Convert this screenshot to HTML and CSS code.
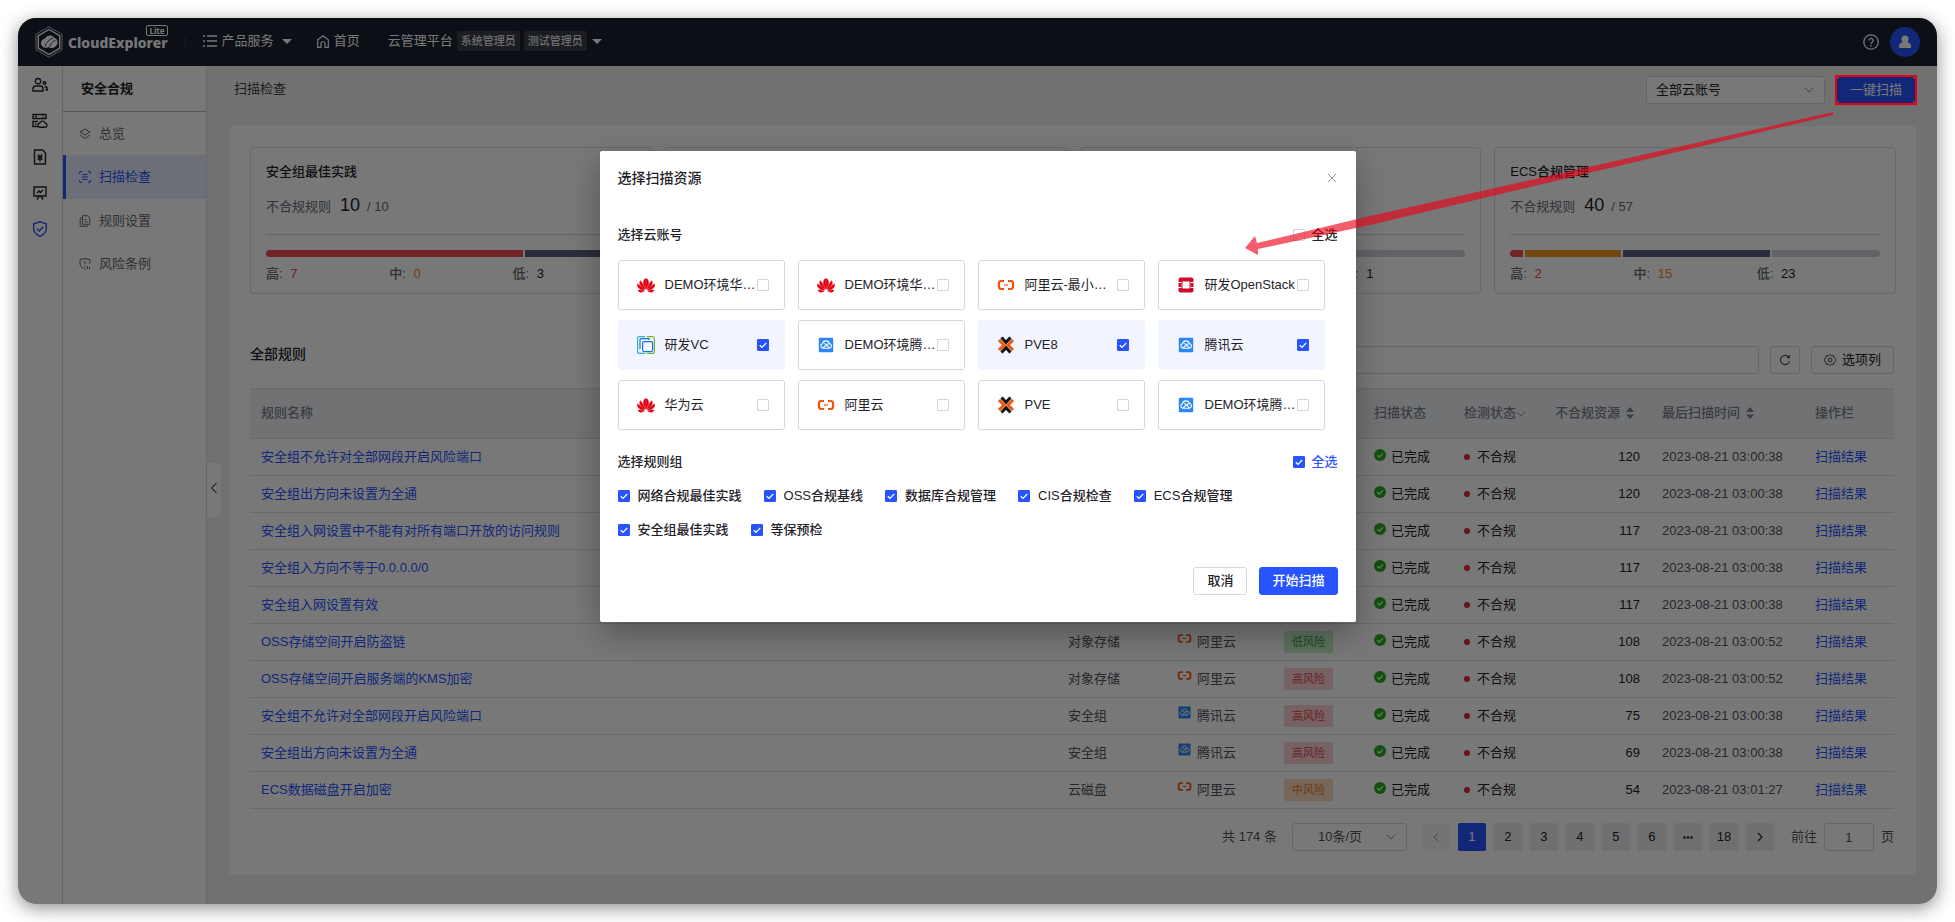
FILE: index.html
```html
<!DOCTYPE html>
<html lang="zh-CN">
<head>
<meta charset="utf-8">
<title>CloudExplorer Lite - 扫描检查</title>
<link rel="stylesheet" href="styles.css">
</head>
<body>
<svg class="sprite" aria-hidden="true">
  <symbol id="i-huawei" viewBox="0.500 1 17 15.500"><g fill="#e60012" stroke="#e60012" stroke-width=".5"><path d="M8.700 12.500C6.800 9 5.600 6 7.800 3.200c.4-.4.800-.5 1-.4.300 3.200.200 6.600-.1 9.700z"/><path d="M9.300 12.500c1.900-3.500 3.100-6.500.9-9.300-.4-.4-.8-.5-1-.4-.3 3.200-.2 6.600.1 9.700z"/><path d="M8 13C7 9.500 5.800 7 3.800 4.700 2.300 6.800 2.600 8.700 8 13z"/><path d="M10 13c1-3.500 2.200-6 4.200-8.300C15.700 6.800 15.400 8.700 10 13z"/><path d="M7.500 13.600C5.600 11.200 3.800 9.300 1 7.800c-.5 3 1.300 5.400 6.500 5.800z"/><path d="M10.500 13.600c1.900-2.400 3.700-4.300 6.500-5.800.5 3-1.300 5.400-6.500 5.800z"/><path d="M7.300 14.500c-2.400-.7-4.300-1-5.800-.9.800 2.100 3.100 2.600 5.800.9z"/><path d="M10.700 14.500c2.400-.7 4.300-1 5.800-.9-.8 2.100-3.100 2.600-5.800.9z"/></g></symbol>
  <symbol id="i-ali" viewBox="0 0 18 18"><path d="M7 5H4.200A2.500 2.500 0 0 0 1.900 7.500v3A2.500 2.500 0 0 0 4.200 13H7M11 5h2.800a2.500 2.500 0 0 1 2.300 2.500v3a2.500 2.500 0 0 1-2.300 2.500H11" fill="none" stroke="#f6540d" stroke-width="2.200"/><path d="M7 9h4" stroke="#f6540d" stroke-width="1.200"/></symbol>
  <symbol id="i-openstack" viewBox="0 0 18 18"><path fill="#cf0a2c" d="M1.500 3.500a2 2 0 0 1 2-2h11a2 2 0 0 1 2 2V6h-4V5.500h-7V6h-4zM1.500 7h2.700v4H1.500zM13.800 7h2.700v4h-2.700zM1.500 12h4v.5h7V12h4v2.500a2 2 0 0 1-2 2h-11a2 2 0 0 1-2-2zM5.500 6v6h-1V6zM13.500 6v6h-1V6z"/></symbol>
  <symbol id="i-vc" viewBox="0 0 18 18"><g fill="none"><path d="M8 .6H2.600a2 2 0 0 0-2 2v12.800a2 2 0 0 0 2 2H8" stroke="#25b5d0" stroke-width="1.200"/><path d="M10 .6h5.400a2 2 0 0 1 2 2v12.800a2 2 0 0 1-2 2H10" stroke="#6fb52c" stroke-width="1.200"/><rect x="5.600" y="5.600" width="10" height="10" rx="1.500" stroke="#1a73d9" stroke-width="1.200"/><path d="M3 13V4a1.400 1.400 0 0 1 1.400-1.400H12V4" stroke="#1a73d9" stroke-width="1.200"/></g></symbol>
  <symbol id="i-tencent" viewBox="0 0 18 18"><rect x="1.800" y="1.800" width="14.400" height="14.400" rx="1" fill="#2b87f5"/><path d="M5.800 12.200a2.300 2.300 0 0 1-.3-4.500 3.600 3.600 0 0 1 7-.2 2.400 2.400 0 0 1 0 4.700zM6 12l4-3.600c1-.8 2-.8 3-.3M7 7.800c1.500-.4 2.400.3 5.200 4" fill="none" stroke="#fff" stroke-width="1.100"/></symbol>
  <symbol id="i-pve" viewBox="0 0 18 18"><g fill="none" stroke-width="3"><path d="M2 4l5 5-5 5M16 4l-5 5 5 5" stroke="#f0560a"/><path d="M4.500 1.500L9 6.300l4.500-4.800M4.500 16.500L9 11.700l4.500 4.800" stroke="#111"/></g></symbol>
  <symbol id="i-done" viewBox="0 0 12 12"><circle cx="6" cy="6" r="6" fill="#2ca91e"/><path d="M3.300 6.200l2 1.900 3.400-3.700" fill="none" stroke="#e8ffe8" stroke-width="1.300"/></symbol>
  <symbol id="i-sort" viewBox="0 0 8 12"><path d="M0 5l4-5 4 5zM0 7.500l4 4.500 4-4.500z" fill="#7d828c"/></symbol>
  <symbol id="i-down" viewBox="0 0 10 6"><path d="M.7.700L5 5 9.300.7" fill="none" stroke="#8f959e"/></symbol>
</svg>
<div class="window">
  <header class="topbar">
    <div class="brand">
      <svg class="brand-mark" viewBox="0 0 28 32"><g fill="none" stroke="#fff"><path d="M14 .8L27 8.200v15.600L14 31.200 1 23.800V8.200z" stroke-width="1" stroke-dasharray="1.500 .7"/><path d="M14 3.500L24.700 9.700v12.600L14 28.500 3.300 22.300V9.700z" stroke-width="1.400"/></g><path d="M7 20c-2.500-3 0-7 3-7.500 2-4 8-4 9.500-.5 4 .8 4 6.500 1 8.500-2.500 2.500-6 1.500-7 .5-2 1.500-5 1-6.500-1z" fill="#fff"/><path d="M10 20.500c1-4 4-7 8-8.500M14.500 21c.5-3 3-5.500 6-6.500" stroke="#1a202e" fill="none" stroke-width=".8"/></svg>
      <div class="brand-text"><span class="brand-lite">Lite</span><span class="brand-name">CloudExplorer</span></div>
      <i class="brand-rule"></i>
    </div>
    <nav class="topnav">
      <button class="nav-item nav-products" type="button"><svg width="14" height="12" viewBox="0 0 14 12"><path d="M0 1h2M4 1h10M0 6h2M4 6h10M0 11h2M4 11h10" stroke="#fff" stroke-width="1.300"/></svg><span>产品服务</span><i class="caret"></i></button>
      <a class="nav-item nav-home" href="#"><svg width="12" height="13" viewBox="0 0 12 13"><path d="M.7 12.300V4.800L6 .8l5.300 4v7.500H8V8.500a2 2 0 0 0-4 0v3.800z" fill="none" stroke="#fff" stroke-width="1.200"/></svg><span>首页</span></a>
      <button class="nav-item nav-role" type="button"><span>云管理平台</span><span class="role">系统管理员</span><span class="role">测试管理员</span><i class="caret"></i></button>
    </nav>
    <div class="user-tools">
      <button class="icon-btn" type="button" aria-label="帮助"><svg width="16" height="16" viewBox="0 0 16 16" fill="none" stroke="#fff" stroke-width="1.300"><circle cx="8" cy="8" r="7.200"/><path d="M5.900 6.500a2.100 2.100 0 1 1 3.200 1.800c-.8.500-1.100.8-1.100 1.600"/><path d="M8 11v1.400" stroke-width="1.500"/></svg></button>
      <button class="avatar" type="button" aria-label="用户"><svg width="14" height="14" viewBox="0 0 14 14" fill="#fff"><circle cx="7" cy="4" r="3.600"/><path d="M5 7h4c3 1 4 2 4 5v1H1v-1c0-3 1-4 4-5z"/></svg></button>
    </div>
  </header>
  <div class="body">
    <nav class="rail">
      <a href="#" aria-label="用户管理"><svg viewBox="0 0 16 16"><circle cx="6" cy="4.200" r="2.700"/><path d="M1 14v-2c0-2 1.300-3 3-3h4c1.700 0 3 1 3 3v2z"/><circle cx="12.500" cy="6" r="1.300"/><path d="M12.500 9.500c1.700 0 2.700.8 2.700 2.200V13H13.500"/></svg></a>
      <a href="#" aria-label="云服务器"><svg viewBox="0 0 16 16"><path d="M1 1.500h13v4H1zM6 13.500H1v-5h5M3 3.500h2M10.500 3.500h1M3 11h1.500M7.800 14.300a2.200 2.200 0 0 1 0-4.300 2.900 2.900 0 0 1 5.400 0 2.200 2.200 0 0 1 0 4.300z"/></svg></a>
      <a href="#" aria-label="账单"><svg viewBox="0 0 16 16"><path d="M2.500 1h8l3 3v11h-11zM5.800 5.500L8 8l2.200-2.500M8 8v4.500M5.500 8.300h5M5.500 10.300h5"/></svg></a>
      <a href="#" aria-label="运营分析"><svg viewBox="0 0 16 16"><path d="M2 2h12v9H2zM5 8l2-2 1.500 1.500L11 5M5 14.500l2-3M11 14.500l-2-3M1.500 2h13"/></svg></a>
      <a class="current" href="#" aria-label="安全合规"><svg viewBox="0 0 16 16"><path d="M8 .8l6.300 2v5c0 3.500-2.300 5.800-6.300 7.500-4-1.700-6.300-4-6.300-7.500v-5zM5 7.800L7.300 10l4-4.300"/></svg></a>
    </nav>
    <aside class="side">
      <h1>安全合规</h1>
      <a class="side-item" href="#"><svg viewBox="0 0 12 12"><path d="M6 1l5 3-5 3-5-3zM1 7l5 3.500L11 7"/></svg>总览</a>
      <a class="side-item active" href="#"><svg viewBox="0 0 12 12"><path d="M.7 3V.7H3M9 .7h2.300V3M11.300 9v2.300H9M3 11.300H.7V9M3.500 3.500h5M3 6h6M3.500 8.500h5"/></svg>扫描检查</a>
      <a class="side-item" href="#"><svg viewBox="0 0 12 12"><path d="M3.500.7h5l2.300 2.300v6.300H3.500zM3.500 3H1.200v8.300h7V9.500M5.300 4.500h2M5.300 6.800h3.500"/></svg>规则设置</a>
      <a class="side-item" href="#"><svg viewBox="0 0 12 12"><path d="M6.500 11C3 9.700 1 8.500 1 5.500v-4L6 .6l5 .9v4.300M6 3v3.500M6 7.500v1M8.500 8v3M10.500 8.500v2.500"/></svg>风险条例</a>
    </aside>
    <main class="main">
      <button class="collapse" type="button" aria-label="收起菜单"><svg width="8" height="12" viewBox="0 0 8 12"><path d="M6.500 1L1.500 6l5 5" fill="none" stroke="#555a63" stroke-width="1.100"/></svg></button>
      <div class="page-head">
        <h2>扫描检查</h2>
        <div class="page-tools">
          <div class="select account-select"><select aria-label="云账号"><option>全部云账号</option></select><svg><use href="#i-down"/></svg></div>
          <div class="scan-wrap"><button class="btn primary" type="button">一键扫描</button></div>
        </div>
      </div>
      <section class="panel">
        <div class="summary">
          <article class="card">
            <h3>安全组最佳实践</h3>
            <p class="figure">不合规规则<strong>10</strong><span>/ 10</span></p>
            <div class="bar"><i class="high" style="flex-grow:70"></i><i class="low" style="flex-grow:30"></i></div>
            <ul class="levels"><li>高: <b class="t-high">7</b></li><li>中: <b class="t-mid">0</b></li><li>低: <b>3</b></li></ul>
          </article>
          <article class="card"></article>
          <article class="card">
            <h3></h3><p class="figure"></p>
            <div class="bar"><i class="rest" style="flex-grow:1"></i></div>
            <ul class="levels"><li></li><li></li><li>低: <b>1</b></li></ul>
          </article>
          <article class="card">
            <h3>ECS合规管理</h3>
            <p class="figure">不合规规则<strong>40</strong><span>/ 57</span></p>
            <div class="bar"><i class="high" style="flex-grow:2"></i><i class="mid" style="flex-grow:15"></i><i class="low" style="flex-grow:23"></i><i class="rest" style="flex-grow:17"></i></div>
            <ul class="levels"><li>高: <b class="t-high">2</b></li><li>中: <b class="t-mid">15</b></li><li>低: <b>23</b></li></ul>
          </article>
        </div>
        <div class="table-tools">
          <h2>全部规则</h2>
          <input class="search" type="text" aria-label="搜索">
          <button class="btn square" type="button" aria-label="刷新"><svg width="12" height="12" viewBox="0 0 12 12"><path d="M10 3.500A4.600 4.600 0 1 0 10.600 7M10.300 1v2.700H7.700" fill="none" stroke="#444" stroke-width="1.100"/></svg></button>
          <button class="btn columns" type="button"><svg width="12" height="12" viewBox="0 0 12 12" fill="none" stroke="#444"><path d="M6 .6l1.500 1.200 2.200-.1.500 2 1.300 1.500v1.600l-1.300 1.500-.5 2-2.200-.1L6 11.400l-1.500-1.200-2.200.1-.5-2L.5 6.800V5.200l1.300-1.500.5-2 2.200.1z"/><circle cx="6" cy="6" r="2"/></svg>选项列</button>
        </div>
        <table class="rules">
          <colgroup><col><col class="c-type"><col class="c-cloud"><col class="c-risk"><col class="c-scan"><col class="c-check"><col class="c-res"><col class="c-time"><col class="c-op"></colgroup>
          <thead><tr><th>规则名称</th><th></th><th></th><th></th><th>扫描状态</th><th>检测状态<svg class="filter"><use href="#i-down"/></svg></th><th>不合规资源<svg class="sort"><use href="#i-sort"/></svg></th><th>最后扫描时间<svg class="sort"><use href="#i-sort"/></svg></th><th>操作栏</th></tr></thead>
          <tbody>
            <tr><td><a href="#">安全组不允许对全部网段开启风险端口</a></td><td></td><td></td><td></td><td class="done"><svg><use href="#i-done"/></svg>已完成</td><td class="bad">不合规</td><td class="num">120</td><td class="time">2023-08-21 03:00:38</td><td><a href="#">扫描结果</a></td></tr>
            <tr><td><a href="#">安全组出方向未设置为全通</a></td><td></td><td></td><td></td><td class="done"><svg><use href="#i-done"/></svg>已完成</td><td class="bad">不合规</td><td class="num">120</td><td class="time">2023-08-21 03:00:38</td><td><a href="#">扫描结果</a></td></tr>
            <tr><td><a href="#">安全组入网设置中不能有对所有端口开放的访问规则</a></td><td></td><td></td><td></td><td class="done"><svg><use href="#i-done"/></svg>已完成</td><td class="bad">不合规</td><td class="num">117</td><td class="time">2023-08-21 03:00:38</td><td><a href="#">扫描结果</a></td></tr>
            <tr><td><a href="#">安全组入方向不等于0.0.0.0/0</a></td><td></td><td></td><td></td><td class="done"><svg><use href="#i-done"/></svg>已完成</td><td class="bad">不合规</td><td class="num">117</td><td class="time">2023-08-21 03:00:38</td><td><a href="#">扫描结果</a></td></tr>
            <tr><td><a href="#">安全组入网设置有效</a></td><td></td><td></td><td></td><td class="done"><svg><use href="#i-done"/></svg>已完成</td><td class="bad">不合规</td><td class="num">117</td><td class="time">2023-08-21 03:00:38</td><td><a href="#">扫描结果</a></td></tr>
            <tr><td><a href="#">OSS存储空间开启防盗链</a></td><td>对象存储</td><td class="cloud"><svg><use href="#i-ali"/></svg>阿里云</td><td><span class="tag green">低风险</span></td><td class="done"><svg><use href="#i-done"/></svg>已完成</td><td class="bad">不合规</td><td class="num">108</td><td class="time">2023-08-21 03:00:52</td><td><a href="#">扫描结果</a></td></tr>
            <tr><td><a href="#">OSS存储空间开启服务端的KMS加密</a></td><td>对象存储</td><td class="cloud"><svg><use href="#i-ali"/></svg>阿里云</td><td><span class="tag red">高风险</span></td><td class="done"><svg><use href="#i-done"/></svg>已完成</td><td class="bad">不合规</td><td class="num">108</td><td class="time">2023-08-21 03:00:52</td><td><a href="#">扫描结果</a></td></tr>
            <tr><td><a href="#">安全组不允许对全部网段开启风险端口</a></td><td>安全组</td><td class="cloud"><svg><use href="#i-tencent"/></svg>腾讯云</td><td><span class="tag red">高风险</span></td><td class="done"><svg><use href="#i-done"/></svg>已完成</td><td class="bad">不合规</td><td class="num">75</td><td class="time">2023-08-21 03:00:38</td><td><a href="#">扫描结果</a></td></tr>
            <tr><td><a href="#">安全组出方向未设置为全通</a></td><td>安全组</td><td class="cloud"><svg><use href="#i-tencent"/></svg>腾讯云</td><td><span class="tag red">高风险</span></td><td class="done"><svg><use href="#i-done"/></svg>已完成</td><td class="bad">不合规</td><td class="num">69</td><td class="time">2023-08-21 03:00:38</td><td><a href="#">扫描结果</a></td></tr>
            <tr><td><a href="#">ECS数据磁盘开启加密</a></td><td>云磁盘</td><td class="cloud"><svg><use href="#i-ali"/></svg>阿里云</td><td><span class="tag orange">中风险</span></td><td class="done"><svg><use href="#i-done"/></svg>已完成</td><td class="bad">不合规</td><td class="num">54</td><td class="time">2023-08-21 03:01:27</td><td><a href="#">扫描结果</a></td></tr>
          </tbody>
        </table>
        <div class="pager">
          <span>共 174 条</span>
          <div class="select size-select"><select aria-label="每页条数"><option>10条/页</option></select><svg><use href="#i-down"/></svg></div>
          <div class="pages">
            <button type="button" class="faded" disabled aria-label="上一页"><svg width="6" height="10" viewBox="0 0 6 10"><path d="M5 1L1 5l4 4" fill="none" stroke="#8f959e"/></svg></button>
            <button type="button" class="on">1</button><button type="button">2</button><button type="button">3</button><button type="button">4</button><button type="button">5</button><button type="button">6</button><button type="button" aria-label="更多"><svg width="10" height="3" viewBox="0 0 10 3" fill="#222"><circle cx="1.500" cy="1.500" r="1.300"/><circle cx="5" cy="1.500" r="1.300"/><circle cx="8.500" cy="1.500" r="1.300"/></svg></button><button type="button">18</button>
            <button type="button" aria-label="下一页"><svg width="6" height="10" viewBox="0 0 6 10"><path d="M1 1l4 4-4 4" fill="none" stroke="#222" stroke-width="1.200"/></svg></button>
          </div>
          <label class="jump">前往<input type="text" value="1">页</label>
        </div>
      </section>
    </main>
  </div>
  <div class="mask"></div>
  <div class="dialog" role="dialog" aria-labelledby="dlg-title">
    <div class="dlg-head"><h2 id="dlg-title">选择扫描资源</h2><button class="icon-btn" type="button" aria-label="关闭"><svg width="10" height="10" viewBox="0 0 10 10"><path d="M1 1l8 8M9 1L1 9" stroke="#8f959e" fill="none"/></svg></button></div>
    <div class="sec-head"><h3>选择云账号</h3><label class="check"><input type="checkbox">全选</label></div>
    <div class="accounts">
      <label class="account"><svg><use href="#i-huawei"/></svg><span>DEMO环境华…</span><input type="checkbox"></label>
      <label class="account"><svg><use href="#i-huawei"/></svg><span>DEMO环境华…</span><input type="checkbox"></label>
      <label class="account"><svg><use href="#i-ali"/></svg><span>阿里云-最小…</span><input type="checkbox"></label>
      <label class="account"><svg><use href="#i-openstack"/></svg><span>研发OpenStack</span><input type="checkbox"></label>
      <label class="account picked"><svg><use href="#i-vc"/></svg><span>研发VC</span><input type="checkbox" checked></label>
      <label class="account"><svg><use href="#i-tencent"/></svg><span>DEMO环境腾…</span><input type="checkbox"></label>
      <label class="account picked"><svg><use href="#i-pve"/></svg><span>PVE8</span><input type="checkbox" checked></label>
      <label class="account picked"><svg><use href="#i-tencent"/></svg><span>腾讯云</span><input type="checkbox" checked></label>
      <label class="account"><svg><use href="#i-huawei"/></svg><span>华为云</span><input type="checkbox"></label>
      <label class="account"><svg><use href="#i-ali"/></svg><span>阿里云</span><input type="checkbox"></label>
      <label class="account"><svg><use href="#i-pve"/></svg><span>PVE</span><input type="checkbox"></label>
      <label class="account"><svg><use href="#i-tencent"/></svg><span>DEMO环境腾…</span><input type="checkbox"></label>
    </div>
    <div class="sec-head"><h3>选择规则组</h3><label class="check all-on"><input type="checkbox" checked>全选</label></div>
    <div class="groups">
      <label class="check"><input type="checkbox" checked>网络合规最佳实践</label>
      <label class="check"><input type="checkbox" checked>OSS合规基线</label>
      <label class="check"><input type="checkbox" checked>数据库合规管理</label>
      <label class="check"><input type="checkbox" checked>CIS合规检查</label>
      <label class="check"><input type="checkbox" checked>ECS合规管理</label>
      <label class="check"><input type="checkbox" checked>安全组最佳实践</label>
      <label class="check"><input type="checkbox" checked>等保预检</label>
    </div>
    <div class="dlg-foot"><button class="btn" type="button">取消</button><button class="btn primary" type="button">开始扫描</button></div>
    <svg class="pointer" viewBox="0 0 590 144" aria-hidden="true"><path d="M589 1v3L126 114 14 138v6L1 137l10-12 2 7L126 105z" fill="#eb0014" fill-opacity=".63"/></svg>
  </div>
</div>
</body>
</html>
```
FILE: styles.css
```css
* { box-sizing: border-box; }
body {
  margin: 0;
  padding: 18px;
  background: #fff;
  color: #1f2329;
  font: 13px/20px "Liberation Sans", "Noto Sans CJK SC", sans-serif;
}
h1, h2, h3, p, ul { margin: 0; padding: 0; font-size: 13px; font-weight: 500; }
li { list-style: none; }
a { color: #2754ff; text-decoration: none; }
button, input, select { font: inherit; color: inherit; margin: 0; padding: 0; }
button { border: 0; background: none; }
.sprite { position: absolute; width: 0; height: 0; }

.window {
  position: relative;
  display: flex;
  flex-direction: column;
  min-height: calc(100vh - 36px);
  border-radius: 18px;
  overflow: hidden;
  background: #f0f0f0;
}
body::before {
  content: "";
  position: absolute;
  inset: 18px;
  border-radius: 18px;
  box-shadow: 0 4px 18px rgba(0, 0, 0, .45);
}
.mask {
  position: absolute;
  inset: 0;
  z-index: 2;
  background: rgba(0, 0, 0, .53);
}

.topbar {
  display: flex;
  align-items: center;
  height: 48px;
  padding: 0 17px;
  background: #1a202e;
  color: #fff;
}
.brand { display: flex; align-items: center; }
.brand-mark { width: 28px; height: 32px; margin-right: 5px; }
.brand-text { display: flex; flex-direction: column; padding-bottom: 9px; }
.brand-name { font: 800 14px/14px "Noto Sans", sans-serif; }
.brand-lite {
  align-self: flex-end;
  padding: 0 2px;
  border: 1px solid #fff;
  border-radius: 2px;
  font: 700 8px/9px "Noto Sans", sans-serif;
}
.brand-rule { width: 1px; height: 12px; margin-left: 17px; background: #333a48; }
.topnav { display: flex; flex: 1; align-items: center; padding-bottom: 2px; }
.nav-item { display: flex; align-items: center; gap: 5px; color: #fff; }
.nav-products { margin-left: 17px; }
.nav-home { margin-left: 25px; }
.nav-role { margin-left: 28px; gap: 4px; }
.nav-products .caret { margin-left: 3px; }
.nav-role .caret { margin-left: 1px; }
.role { padding: 0 4px; border-radius: 2px; background: #3a3f4b; font-size: 11px; }
.caret { border: 5px solid transparent; border-top-color: #fff; border-bottom: 0; }
.user-tools { display: flex; align-items: center; gap: 11px; padding-bottom: 1px; }
.icon-btn, .avatar { display: flex; align-items: center; justify-content: center; }
.avatar { width: 30px; height: 30px; border-radius: 50%; background: #2754ff; }

.body { display: flex; flex: 1; }
.rail {
  display: flex;
  flex-direction: column;
  align-items: center;
  gap: 20px;
  width: 45px;
  padding-top: 11px;
  border-right: 1px solid #d5d7dc;
  background: #fff;
}
.rail svg { display: block; width: 16px; height: 16px; fill: none; stroke: #1f2329; stroke-width: 1.400; }
.rail .current svg { stroke: #2754ff; }
.side { width: 144px; border-right: 1px solid #dcdee3; background: #fff; }
.side h1 { padding: 13px 18px 12px; border-bottom: 1px solid #bbb; font-weight: 700; }
.side-item {
  display: flex;
  align-items: center;
  gap: 8px;
  height: 43px;
  padding-left: 13px;
  border-left: 3px solid transparent;
  color: #646a73;
}
.side-item svg { width: 12px; height: 12px; fill: none; stroke: currentColor; }
.side-item.active { height: 44px; border-left-color: #2754ff; background: #e5ecff; color: #2754ff; }

.main { position: relative; flex: 1; min-width: 0; padding: 10px 21px 28px 22px; }
.collapse {
  position: absolute;
  left: 0;
  top: 397px;
  width: 14px;
  height: 54px;
  border-radius: 0 4px 4px 0;
  background: #fff;
}
.page-head { display: flex; align-items: flex-start; justify-content: space-between; height: 50px; }
.page-head h2 { padding: 3px 5px; font-weight: 400; color: #3c4148; }
.page-tools { display: flex; align-items: center; gap: 11px; }
.select { position: relative; height: 28px; }
.select select {
  width: 100%;
  height: 100%;
  padding: 0 9px;
  border: 1px solid #d5d7e0;
  border-radius: 3px;
  background: #fff;
  appearance: none;
}
.select svg { position: absolute; right: 11px; top: 11px; width: 10px; height: 6px; pointer-events: none; }
.account-select { width: 179px; }
.scan-wrap { position: relative; padding: 1px; }
.scan-wrap::after { content: ""; position: absolute; inset: -1px; z-index: 3; border: 2px solid #e60012; }
.btn {
  height: 28px;
  padding: 0 13px;
  border: 1px solid #d5d7e0;
  border-radius: 3px;
  background: #fff;
  font-weight: 500;
}
.btn.primary { padding: 0 12px; border-color: #2754ff; background: #2754ff; color: #fff; }
.scan-wrap .btn { display: block; height: 26px; font-weight: 400; }

.panel { min-height: 749px; padding: 21px 22px 20px 21px; border-radius: 4px; background: #fff; }
.summary { display: grid; grid-template-columns: repeat(4, 1fr); gap: 13px; margin-right: -2px; }
.card { min-height: 147px; padding: 14px 15px 8px; border: 1px solid #dcdee3; border-radius: 4px; }
.card h3 { min-height: 20px; }
.card .figure {
  display: flex;
  align-items: baseline;
  height: 53px;
  padding-top: 13px;
  border-bottom: 1px solid #d5d7dc;
  font-weight: 400;
  color: #646a73;
}
.figure strong { margin: 0 7px 0 9px; font-size: 18px; font-weight: 500; color: #1f2329; }
.bar { display: flex; gap: 2px; height: 7px; margin: 15px 0 7px; border-radius: 4px; overflow: hidden; }
.bar i { flex-basis: 0; }
.bar .high { background: #f04d52; }
.bar .mid { background: #f59a23; }
.bar .low { background: #5d6180; }
.bar .rest { background: #d0d3d8; }
.levels { display: grid; grid-template-columns: repeat(3, 1fr); color: #646a73; }
.levels b { margin-left: 4px; font-weight: 500; color: #1f2329; }
.levels .t-high { color: #f54a45; }
.levels .t-mid { color: #f58220; }

.table-tools { display: flex; align-items: center; gap: 11px; margin-top: 50px; }
.table-tools h2 { flex: 1; height: 32px; font-size: 14px; }
.search { width: 600px; height: 28px; border: 1px solid #d5d7e0; border-radius: 3px; background: #fff; }
.btn.square { width: 30px; padding: 0; }
.btn.square svg { display: block; margin: auto; }
.btn.columns { display: flex; align-items: center; gap: 6px; padding: 0 12px; font-weight: 400; }

.rules { width: 100%; margin-top: 12px; table-layout: fixed; border-collapse: collapse; }
.c-type { width: 109px; }
.c-cloud, .c-res { width: 107px; }
.c-risk, .c-scan, .c-op { width: 90px; }
.c-check { width: 91px; }
.c-time { width: 153px; }
.rules th {
  height: 50px;
  padding: 0 0 2px 11px;
  border: 1px solid #e2e4ea;
  border-width: 1px 0;
  background: #f0f2f6;
  color: #7d828c;
  font-weight: 500;
  text-align: left;
  white-space: nowrap;
}
.rules td { height: 37px; padding: 0 0 1px 11px; border-bottom: 1px solid #dfe1e6; color: #51565f; white-space: nowrap; }
.filter { width: 10px; height: 6px; }
.sort { width: 8px; height: 12px; margin-left: 6px; vertical-align: -2px; }
.rules .done, .rules .bad, .rules .num { color: #1f2329; }
.done svg { width: 12px; height: 12px; margin-right: 5px; }
.cloud svg { width: 15px; height: 15px; margin-right: 5px; }
.bad::before { content: ""; display: inline-block; width: 6px; height: 6px; margin-right: 7px; border-radius: 50%; background: #e02d32; vertical-align: 1px; }
.rules .num { padding-right: 11px; text-align: right; font-weight: 500; }
.tag { display: inline-block; padding: 1px 8px; border-radius: 2px; font-size: 11px; }
.tag.green { background: #c6f0c8; color: #2f9c3f; }
.tag.red { background: #fbd0d1; color: #e0434a; }
.tag.orange { background: #fddcbf; color: #e87a1d; }

.pager { display: flex; align-items: center; justify-content: flex-end; gap: 15px; margin-top: 14px; color: #51565f; }
.size-select { width: 115px; }
.size-select select { padding-left: 25px; }
.pages { display: flex; gap: 8px; }
.pages button {
  display: flex;
  align-items: center;
  justify-content: center;
  width: 28px;
  height: 28px;
  border-radius: 2px;
  background: #ebedf1;
  color: #1f2329;
  font-weight: 500;
}
.pages .faded { background: #f5f6f8; }
.pages .on { background: #2754ff; color: #fff; }
.jump { display: flex; align-items: center; gap: 7px; margin-left: 2px; }
.jump input { width: 50px; height: 28px; border: 1px solid #d5d7e0; border-radius: 3px; background: #fff; text-align: center; }

.dialog {
  position: absolute;
  top: 133px;
  left: 50%;
  z-index: 3;
  width: 756px;
  margin-left: -378px;
  padding: 17px 18px 27px;
  border-radius: 2px;
  background: #fff;
  box-shadow: 0 12px 32px rgba(0, 0, 0, .3);
}
.dlg-head, .sec-head { display: flex; align-items: center; justify-content: space-between; }
.dlg-head h2 { font-size: 14px; }
.dlg-head .icon-btn { padding-right: 1px; }
.dlg-head { margin-bottom: 37px; }
.check { display: flex; align-items: center; gap: 8px; font-weight: 500; }
.sec-head .check { gap: 6px; }
.check.all-on { color: #2754ff; }
input[type="checkbox"] {
  appearance: none;
  flex: none;
  width: 12px;
  height: 12px;
  border: 1px solid #d5d7e0;
  border-radius: 1px;
  background: #fff;
}
input[type="checkbox"]:checked {
  border-color: #2754ff;
  background: #2754ff url("data:image/svg+xml,%3Csvg xmlns='http://www.w3.org/2000/svg' viewBox='0 0 10 10'%3E%3Cpath d='M1.800 5.200l2.200 2.100 4.200-4.300' fill='none' stroke='white' stroke-width='1.200'/%3E%3C/svg%3E");
}
.accounts {
  display: grid;
  grid-template-columns: repeat(4, minmax(0, 1fr));
  gap: 10px 13px;
  margin: 15px 13px 22px 0;
}
.account {
  display: flex;
  align-items: center;
  height: 50px;
  padding: 0 15px 0 18px;
  border: 1px solid #d5d7e0;
  border-radius: 3px;
}
.account.picked { border-color: #f2f5ff; background: #f2f5ff; }
.account svg { flex: none; width: 18px; height: 18px; margin-right: 10px; }
.account span { flex: 1; min-width: 0; white-space: nowrap; }
.groups { display: flex; flex-wrap: wrap; gap: 14px 22px; margin: 14px 0 27px; }
.dlg-foot { display: flex; justify-content: flex-end; gap: 12px; }
.pointer { position: absolute; left: 644px; top: -40px; width: 590px; height: 144px; pointer-events: none; }
```
